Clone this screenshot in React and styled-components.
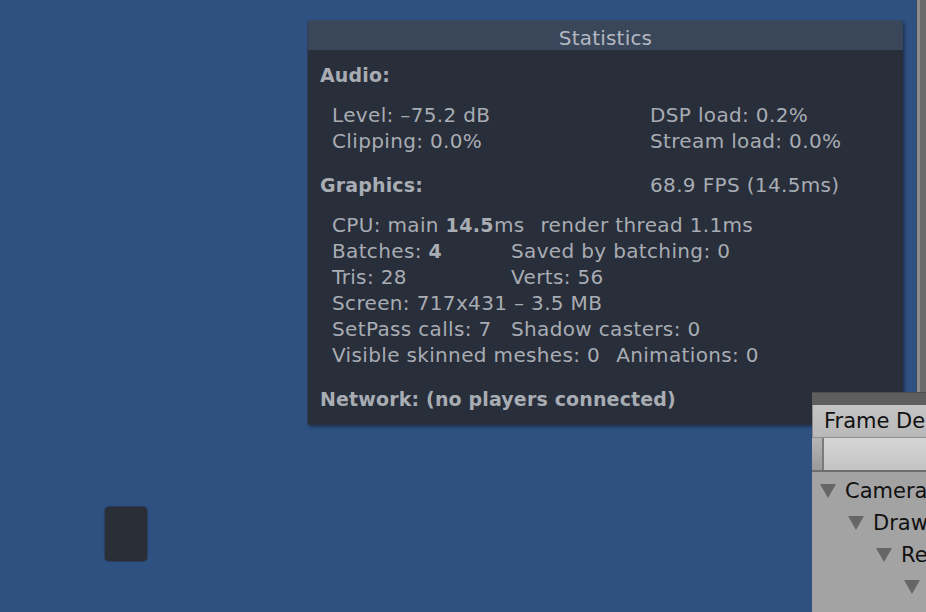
import React from 'react'
import styled, { createGlobalStyle } from 'styled-components'

const GlobalStyle = createGlobalStyle`
  html, body {
    margin: 0;
    padding: 0;
    width: 926px;
    height: 612px;
    overflow: hidden;
    background: #2e5182;
  }
  #root {
    width: 926px;
    height: 612px;
  }
`;

const Desktop = styled.div`
  position: relative;
  width: 926px;
  height: 612px;
  display: flex;
  font-family: "DejaVu Sans", "Liberation Sans", sans-serif;
  overflow: hidden;
`;

const GameView = styled.div`
  position: relative;
  flex: 1;
  background: #2e5182;
`;

const Splitter = styled.div`
  width: 10px;
  display: flex;
  .edge { width: 1px; background: #38475e; }
  .light { width: 3px; background: #8c8c8c; }
  .dark { flex: 1; background: #6b6b6b; }
`;

const SceneBlock = styled.div`
  position: absolute;
  left: 105px;
  top: 507px;
  width: 42px;
  height: 54px;
  border-radius: 4px;
  background: #2a2e37;
  box-shadow: 0 0 1px 1px rgba(42, 46, 55, 0.5);
`;

const StatsPanel = styled.div`
  position: absolute;
  left: 307px;
  top: 20px;
  width: 595px;
  border-radius: 4px 4px 2px 2px;
  background: #282e3a;
  box-shadow: 2px 2px 3px rgba(10, 20, 40, 0.45);
  border-top: 1px solid #3e4b60;
  border-left: 1px solid #34405a;
  overflow: hidden;
  color: #a8acb3;
  font-size: 20px;
  letter-spacing: 0.35px;
`;

const TitleBar = styled.div`
  height: 29px;
  background: #3a4659;
  color: #b4b9c1;
  text-align: center;
  font-size: 20px;
  line-height: 34px;
  letter-spacing: 0.2px;
`;

const StatsBody = styled.div`
  padding: 12px 13px 13px 12px;
  display: flex;
  flex-direction: column;
  gap: 18px;
`;

const Section = styled.div`
  display: flex;
  flex-direction: column;
  gap: 14px;
`;

const Row = styled.div`
  display: grid;
  grid-template-columns: ${p => p.$col}px auto;
  line-height: 26px;
  white-space: pre;
  b { font-weight: bold; font-size: 19px; }
`;

const Header = styled(Row)`
  font-weight: bold;
  font-size: 19px;
  letter-spacing: 0.15px;
  .value { font-weight: normal; font-size: 20px; letter-spacing: 0.35px; }
`;

const Items = styled.div`
  padding-left: 12px;
  display: flex;
  flex-direction: column;
`;

const Line = styled.div`
  display: flex;
  gap: 16px;
  line-height: 26px;
  white-space: pre;
  b { font-weight: bold; font-size: 19px; }
`;

const FrameDebugger = styled.div`
  position: absolute;
  left: 812px;
  top: 392px;
  right: 0;
  bottom: 0;
  background: #a3a3a3;
  border-top: 1px solid #4c4c4c;
  font-family: "DejaVu Sans", "Liberation Sans", sans-serif;
  font-size: 21px;
  color: #111;
  display: flex;
  flex-direction: column;
  overflow: hidden;
`;

const TabStrip = styled.div`
  height: 12px;
  background: #5e5e5e;
`;

const Tab = styled.div`
  height: 32px;
  background: linear-gradient(#c4c4c4, #b9b9b9);
  border-left: 1px solid #8a8a8a;
  border-bottom: 1px solid #8e8e8e;
  padding-left: 11px;
  line-height: 33px;
  white-space: nowrap;
`;

const Toolbar = styled.div`
  height: 32px;
  display: flex;
  border-bottom: 2px solid #6e6e6e;
  .grip {
    width: 10px;
    background: linear-gradient(#b5b5b5, #9a9a9a);
    border-right: 2px solid #7b7b7b;
  }
  .field {
    flex: 1;
    background: linear-gradient(#d6d6d6, #c3c3c3);
  }
`;

const Tree = styled.div`
  padding-top: 3px;
  display: flex;
  flex-direction: column;
`;

const TreeItem = styled.div`
  height: 32px;
  display: flex;
  align-items: center;
  padding-left: ${p => 8 + p.$depth * 28}px;
  white-space: nowrap;
  svg { flex: none; margin-right: 9px; }
`;

const Arrow = () => (
  <svg width="16" height="14" viewBox="0 0 16 14">
    <polygon points="0,0 16,0 8,14" fill="#666" />
  </svg>
);

const treeItems = [
  { label: 'Camera.Render', depth: 0 },
  { label: 'Drawing', depth: 1 },
  { label: 'Render.OpaqueGeometry', depth: 2 },
  { label: '', depth: 3 },
];

const App = () => {
  return (
    <Desktop>
      <GlobalStyle />
      <GameView>
        <SceneBlock />
        <StatsPanel>
          <TitleBar>Statistics</TitleBar>
          <StatsBody>
            <Section>
              <Header $col={330}><span>Audio:</span></Header>
              <Items>
                <Row $col={318}><span>Level: –75.2 dB</span><span>DSP load: 0.2%</span></Row>
                <Row $col={318}><span>Clipping: 0.0%</span><span>Stream load: 0.0%</span></Row>
              </Items>
            </Section>
            <Section>
              <Header $col={330}><span>Graphics:</span><span className="value">68.9 FPS (14.5ms)</span></Header>
              <Items>
                <Line><span>CPU: main <b>14.5</b>ms</span><span>render thread 1.1ms</span></Line>
                <Row $col={179}><span>Batches: <b>4</b></span><span>Saved by batching: 0</span></Row>
                <Row $col={179}><span>Tris: 28</span><span>Verts: 56</span></Row>
                <Line><span>Screen: 717x431 – 3.5 MB</span></Line>
                <Row $col={179}><span>SetPass calls: 7</span><span>Shadow casters: 0</span></Row>
                <Line><span>Visible skinned meshes: 0</span><span>Animations: 0</span></Line>
              </Items>
            </Section>
            <Section>
              <Header $col={330}><span>Network: (no players connected)</span></Header>
            </Section>
          </StatsBody>
        </StatsPanel>
      </GameView>
      <Splitter>
        <div className="edge" />
        <div className="light" />
        <div className="dark" />
      </Splitter>
      <FrameDebugger>
        <TabStrip />
        <Tab>Frame Debug</Tab>
        <Toolbar>
          <div className="grip" />
          <div className="field" />
        </Toolbar>
        <Tree>
          {treeItems.map((t, i) => (
            <TreeItem key={i} $depth={t.depth}>
              <Arrow />
              {t.label}
            </TreeItem>
          ))}
        </Tree>
      </FrameDebugger>
    </Desktop>
  )
}

export default App;
